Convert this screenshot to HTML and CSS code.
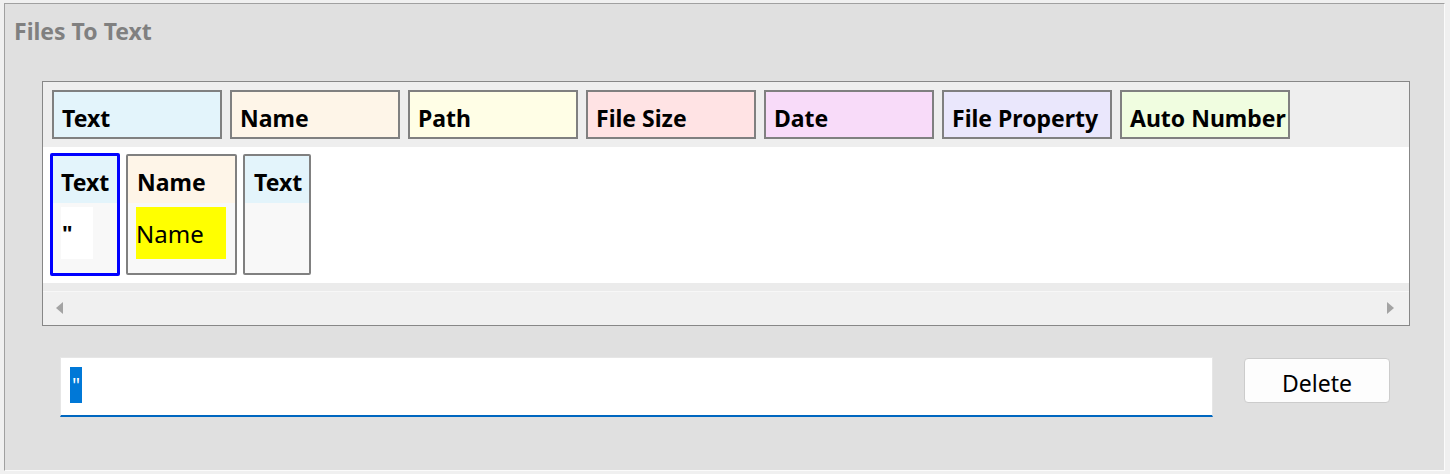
FILE: index.html
```
<!DOCTYPE html>
<html>
<head>
<meta charset="utf-8">
<link rel="stylesheet" href="styles.css">
</head>
<body>
<div class="panel">
  <div class="title">Files To Text</div>
  <div class="frame">
    <div class="palette">
      <div class="chip c-text">Text</div>
      <div class="chip c-name">Name</div>
      <div class="chip c-path">Path</div>
      <div class="chip c-size">File Size</div>
      <div class="chip c-date">Date</div>
      <div class="chip c-prop">File Property</div>
      <div class="chip c-auto">Auto Number</div>
    </div>
    <div class="canvas">
      <div class="item w-text selected">
        <div class="item-head c-text">Text</div>
        <div class="item-body"><div class="field f-text">"</div></div>
      </div>
      <div class="item w-name">
        <div class="item-head c-name">Name</div>
        <div class="item-body"><div class="field f-name">Name</div></div>
      </div>
      <div class="item w-text">
        <div class="item-head c-text">Text</div>
        <div class="item-body"></div>
      </div>
    </div>
    <div class="strip"></div>
    <div class="hscroll">
      <span class="arrow arrow-left"></span>
      <span class="arrow arrow-right"></span>
    </div>
  </div>
  <div class="editor-row">
    <div class="input"><span class="sel">"</span></div>
    <button class="delete">Delete</button>
  </div>
</div>
</body>
</html>
```
FILE: styles.css
```
* { box-sizing: border-box; }
html, body { margin: 0; }
body {
  background: #f0f0f0;
  padding: 3px 5px 3px 4px;
  font-family: "Noto Sans", "Open Sans", sans-serif;
  color: #000;
}
.panel {
  width: 1441px;
  height: 468px;
  background: #e0e0e0;
  border-top: 1px solid #a0a0a0;
  border-left: 1px solid #a0a0a0;
  border-right: 1px solid #fbfbfb;
  border-bottom: 1px solid #fbfbfb;
}
.title {
  margin: 12px 0 0 9px;
  font-size: 23px;
  line-height: 30px;
  font-weight: 700;
  color: #808080;
}
.frame {
  margin: 35px 0 0 37px;
  width: 1368px;
  height: 245px;
  border: 1px solid #878787;
  display: flex;
  flex-direction: column;
}
.palette {
  height: 65px;
  background: #eeeeee;
  padding: 8px 9px;
  display: flex;
  gap: 8px;
}
.chip {
  width: 170px;
  height: 49px;
  border: 2px solid #808080;
  padding: 0 0 4px 8px;
  display: flex;
  align-items: flex-end;
  font-size: 23px;
  line-height: 30px;
  font-weight: 700;
  white-space: nowrap;
}
.c-text { background: #e3f4fb; }
.c-name { background: #fef5e8; }
.c-path { background: #fffee6; }
.c-size { background: #ffe3e4; }
.c-date { background: #f8dbf9; }
.c-prop { background: #eae7fc; }
.c-auto { background: #f0fde0; }
.canvas {
  height: 136px;
  background: #ffffff;
  padding: 7px 8px 0;
  display: flex;
  align-items: flex-start;
  gap: 6px;
}
.item {
  height: 121px;
  border: 2px solid #808080;
  border-radius: 2px;
  background: #f8f8f8;
  display: flex;
  flex-direction: column;
  overflow: hidden;
}
.item.selected {
  border: 3px solid #0000ff;
  margin: -1px 0 0 -1px;
  height: 123px;
}
.w-text { width: 68px; }
.item.w-text.selected { width: 70px; }
.w-name { width: 111px; }
.item-head {
  height: 47px;
  padding: 11px 0 0 9px;
  font-size: 23px;
  line-height: 30px;
  font-weight: 700;
  white-space: nowrap;
  flex-shrink: 0;
}
.item-body {
  padding: 4px 0 0 9px;
}
.selected .item-head { padding-left: 8px; }
.selected .item-body { padding-left: 8px; }
.w-name .item-body { padding-left: 8px; }
.field {
  height: 52px;
  line-height: 52px;
}
.f-text {
  width: 32px;
  background: #ffffff;
  font-size: 22px;
  font-weight: 700;
  padding: 3px 0 0 1px;
  line-height: 44px;
}
.f-name {
  width: 90px;
  background: #ffff00;
  font-size: 24px;
  padding: 2px 0 0;
  line-height: 50px;
}
.strip {
  height: 9px;
  background: #ebebeb;
  border-bottom: 1px solid #f7f7f7;
  flex-shrink: 0;
}
.hscroll {
  flex: 1;
  background: #f0f0f0;
  display: flex;
  justify-content: space-between;
  align-items: flex-start;
  padding: 10px 15px 0 13px;
}
.arrow {
  width: 0;
  height: 0;
  border-top: 6px solid transparent;
  border-bottom: 6px solid transparent;
}
.arrow-left { border-right: 7px solid #a3a3a3; }
.arrow-right { border-left: 7px solid #a3a3a3; }
.editor-row {
  margin: 31px 0 0 55px;
  display: flex;
  align-items: flex-start;
  gap: 31px;
}
.input {
  width: 1153px;
  height: 60px;
  background: #ffffff;
  border: 1px solid #e6e6e6;
  border-bottom: 2px solid #0067c0;
  padding: 9px 9px;
}
.sel {
  display: inline-block;
  width: 12px;
  height: 36px;
  background: #0078d7;
  color: #ffffff;
  font-size: 20px;
  line-height: 36px;
  text-align: center;
  vertical-align: top;
}
.delete {
  margin-top: 1px;
  width: 146px;
  height: 45px;
  background: #fdfdfd;
  border: 1px solid #cccccc;
  border-radius: 4px;
  font-family: "Noto Sans", "Open Sans", sans-serif;
  font-size: 23px;
  line-height: 30px;
  padding: 4px 0 0;
  color: #000;
}
```
